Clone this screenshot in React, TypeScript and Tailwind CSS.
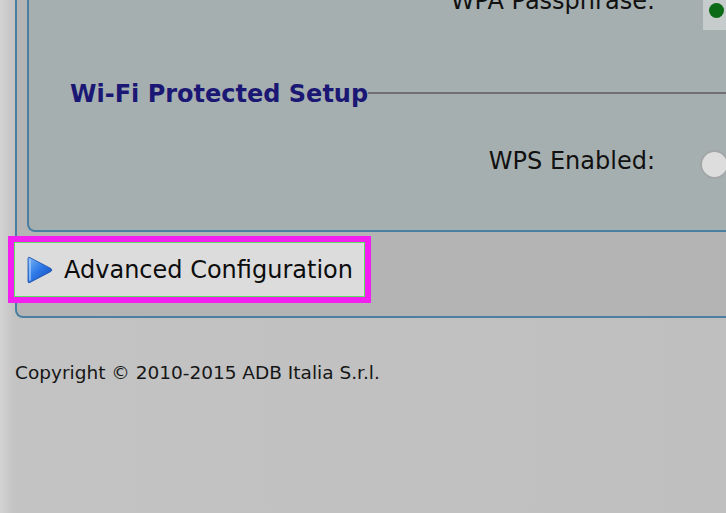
import React from "react";

const sans = "font-['DejaVu_Sans',sans-serif]";

function PlayIcon() {
  return (
    <svg width="30" height="30" viewBox="0 0 30 30" className="shrink-0">
      <defs>
        <linearGradient id="tri" x1="0" y1="0" x2="1" y2="1">
          <stop offset="0" stopColor="#7fb6f5" />
          <stop offset="0.45" stopColor="#2f7be8" />
          <stop offset="1" stopColor="#1446b8" />
        </linearGradient>
      </defs>
      <path
        d="M4 3.5 Q4 1.5 6 2.6 L27 13.6 Q28.8 15 27 16.4 L6 27.4 Q4 28.5 4 26.5 Z"
        fill="url(#tri)"
        stroke="#1a4fa8"
        strokeWidth="0.8"
      />
      <path d="M6 5 L6 25" stroke="#a9d0ff" strokeWidth="1.6" strokeLinecap="round" opacity="0.8" />
    </svg>
  );
}

export default function App() {
  return (
    <div className="w-[726px] h-[513px] overflow-hidden bg-[linear-gradient(to_right,#d3d3d3,#c3c3c3_14px,#bfbfbf)]">
      <div className="pl-[15px]">
        {/* outer panel */}
        <div className="w-[760px] h-[318px] bg-[#b4b4b4] border-l-2 border-b-2 border-[#4a7fa2] rounded-bl-[8px] pl-[10px] flex flex-col">
          {/* inner panel */}
          <div className="h-[232px] bg-[#a6afaf] border-l-2 border-b-2 border-[#4a7fa2] rounded-bl-[8px] flex flex-col">
            <div className="flex items-start h-[30px] pl-[400px]">
              <div className={`w-[226px] text-right text-[24px] leading-none text-[#111] mt-[-11px] ${sans}`}>
                WPA Passphrase:
              </div>
              <div className="ml-[48px] w-[40px] h-[30px] bg-[#c6cbcb] flex items-start pl-[6px] pt-[3px]">
                <div className="w-[15px] h-[15px] rounded-full bg-[#0a6a16]" />
              </div>
            </div>
            <div className="flex items-center mt-[52px] pl-[41px]">
              <div className={`text-[24px] font-bold leading-none text-[#1b1774] ${sans}`}>
                Wi-Fi Protected Setup
              </div>
              <div className="flex-1 h-[2px] bg-[#707074] mt-[-2px]" />
            </div>
            <div className="flex items-center mt-[36px] pl-[400px]">
              <div className={`w-[226px] text-right text-[24px] leading-none text-[#111] ${sans}`}>
                WPS Enabled:
              </div>
              <div className="ml-[45px] mt-[8px] w-[29px] h-[29px] rounded-full bg-[#dddddd] border-2 border-[#a2a6a6] shrink-0" />
            </div>
          </div>
          <div className="mt-[10px] ml-[-13px] w-[351px] h-[55px] bg-[#dcdcdc] border border-[#5fe060] outline-[6px] outline-solid outline-[#f21ff0] flex items-center pl-[9px]">
            <PlayIcon />
            <span className={`ml-[10px] text-[24px] leading-none text-[#0c0c0c] ${sans}`}>
              Advanced Configuration
            </span>
          </div>
        </div>
      </div>
      <div className={`pl-[15px] mt-[46px] text-[18.5px] leading-none text-[#161616] ${sans}`}>
        Copyright © 2010-2015 ADB Italia S.r.l.
      </div>
    </div>
  );
}
